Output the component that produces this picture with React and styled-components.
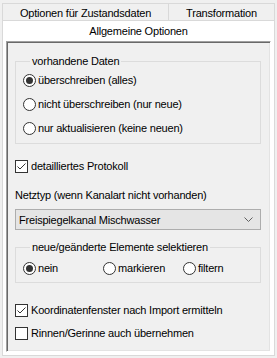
import React from "react";
import styled, { createGlobalStyle } from "styled-components";

const GlobalStyle = createGlobalStyle`
  html, body {
    margin: 0;
    padding: 0;
    background: #f0f0f0;
  }
  body {
    font-family: "Liberation Sans", Arial, sans-serif;
    font-size: 11px;
    letter-spacing: -0.2px;
    color: #000;
  }
`;

const Window = styled.div`
  width: 277px;
  height: 358px;
  box-sizing: border-box;
  padding: 3px 2px 0 2px;
  background: #f0f0f0;
`;

const TabRow = styled.div`
  display: flex;
  height: 17px;
`;

const Tab = styled.div`
  box-sizing: border-box;
  width: ${p => (p.$width ? `${p.$width}px` : "auto")};
  flex: ${p => (p.$width ? "none" : "1")};
  display: flex;
  align-items: center;
  justify-content: center;
  border: 1px solid #d9d9d9;
  border-bottom: none;
  border-left: ${p => (p.$first ? "1px solid #d9d9d9" : "none")};
  background: #f0f0f0;
  line-height: 14px;
  padding-top: 1px;
`;

const ActiveTab = styled.div`
  box-sizing: border-box;
  height: 20px;
  display: flex;
  align-items: center;
  justify-content: center;
  background: #fff;
  border-left: 1px solid #d9d9d9;
  border-right: 1px solid #d9d9d9;
  border-top: 1px solid #d9d9d9;
  padding-top: 1px;
`;

const Page = styled.div`
  box-sizing: border-box;
  height: 316px;
  background: #fff;
  border: 1px solid #d9d9d9;
  border-top: none;
  padding: 1px 3px 3px 3px;
`;

const Sunken = styled.div`
  box-sizing: border-box;
  height: 100%;
  background: #f0f0f0;
  border: 1px solid;
  border-color: #a0a0a0 #ffffff #ffffff #a0a0a0;
  box-shadow: inset 1px 1px 0 #696969, inset -1px -1px 0 #e3e3e3;
  padding: 1px 5px 1px 8px;
  display: flex;
  flex-direction: column;
`;

const Group = styled.fieldset`
  margin: ${p => p.$top}px 4px 0 0;
  padding: 0 0 ${p => p.$bottom}px 7px;
  border: 1px solid #dcdcdc;
  min-width: 0;
`;

const Legend = styled.legend`
  margin-left: 7px;
  padding: 0 2px;
  line-height: 13px;
  height: 13px;
`;

const OptionRow = styled.label`
  display: flex;
  align-items: center;
  height: 24px;
  gap: 2px;
`;

const OptionGrid = styled.div`
  display: grid;
  grid-template-columns: 80px 80px 80px;
  height: 24px;
  margin-top: 2px;
`;

const RadioCircle = styled.span`
  box-sizing: border-box;
  width: 13px;
  height: 13px;
  border: 1px solid #333;
  border-radius: 50%;
  background: #fff;
  display: flex;
  align-items: center;
  justify-content: center;
  flex: none;

  &::after {
    content: "";
    width: 7px;
    height: 7px;
    border-radius: 50%;
    background: ${p => (p.$checked ? "#333" : "transparent")};
  }
`;

const CheckRow = styled.label`
  display: flex;
  align-items: center;
  gap: 3px;
  height: 18px;
  margin-top: ${p => p.$top}px;
`;

const Box = styled.span`
  box-sizing: border-box;
  width: 13px;
  height: 13px;
  border: 1px solid #333;
  background: #fff;
  flex: none;
  display: flex;
`;

const FieldLabel = styled.div`
  line-height: 16px;
  margin-top: 12px;
`;

const Combo = styled.div`
  box-sizing: border-box;
  height: 21px;
  margin-top: 6px;
  margin-right: 4px;
  background: #e5e5e5;
  border: 1px solid #adadad;
  display: flex;
  align-items: center;
  justify-content: space-between;
  padding: 0 7px 0 3px;
`;

const Radio = ({ checked, children }) => (
  <OptionRow>
    <RadioCircle $checked={checked} />
    <span>{children}</span>
  </OptionRow>
);

const Check = ({ checked, top, children }) => (
  <CheckRow $top={top}>
    <Box>
      {checked && (
        <svg width="11" height="11" viewBox="0 0 11 11">
          <path d="M1.5 5.5 L4 8 L9.5 2.5" fill="none" stroke="#333" strokeWidth="1" />
        </svg>
      )}
    </Box>
    <span>{children}</span>
  </CheckRow>
);

export default function App() {
  return (
    <Window>
      <GlobalStyle />
      <TabRow>
        <Tab $width={167} $first>Optionen für Zustandsdaten</Tab>
        <Tab>Transformation</Tab>
      </TabRow>
      <ActiveTab>Allgemeine Optionen</ActiveTab>
      <Page>
        <Sunken>
          <Group $top={12} $bottom={3}>
            <Legend>vorhandene Daten</Legend>
            <Radio checked>überschreiben (alles)</Radio>
            <Radio>nicht überschreiben (nur neue)</Radio>
            <Radio>nur aktualisieren (keine neuen)</Radio>
          </Group>
          <Check checked top={13}>detailliertes Protokoll</Check>
          <FieldLabel>Netztyp (wenn Kanalart nicht vorhanden)</FieldLabel>
          <Combo>
            <span>Freispiegelkanal Mischwasser</span>
            <svg width="9" height="5" viewBox="0 0 9 5">
              <path d="M0.5 0.5 L4.5 4.5 L8.5 0.5" fill="none" stroke="#606060" strokeWidth="1" />
            </svg>
          </Combo>
          <Group $top={11} $bottom={2}>
            <Legend>neue/geänderte Elemente selektieren</Legend>
            <OptionGrid>
              <Radio checked>nein</Radio>
              <Radio>markieren</Radio>
              <Radio>filtern</Radio>
            </OptionGrid>
          </Group>
          <Check checked top={18}>Koordinatenfenster nach Import ermitteln</Check>
          <Check top={5}>Rinnen/Gerinne auch übernehmen</Check>
        </Sunken>
      </Page>
    </Window>
  );
}
